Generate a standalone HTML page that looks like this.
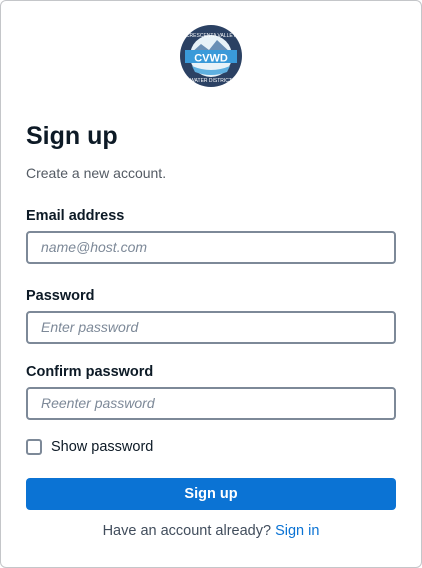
<!DOCTYPE html>
<html><head><style>
*{box-sizing:border-box;margin:0;padding:0}
body{width:422px;height:568px;background:#fff;font-family:"Liberation Sans",sans-serif;position:relative;overflow:hidden}
.card{position:absolute;left:0;top:0;width:422px;height:568px;border:1px solid #c4c6c9;border-radius:6px}
.a{position:absolute;white-space:nowrap}
.h{left:26px;top:122px;font-size:25px;font-weight:bold;color:#0d1a26}
.sub{left:26px;top:165px;font-size:14px;color:#545b64}
.lbl{left:26px;font-size:14.5px;font-weight:bold;color:#0d1a26}
.in{left:26px;width:370px;height:33px;border:2px solid #7d8998;border-radius:4px;padding-left:13px;font-size:14px;font-style:italic;color:#7d8998;line-height:29px}
.cb{left:26px;top:439px;width:16px;height:16px;border:2px solid #7d8998;border-radius:3px}
.btn{left:26px;top:478px;width:370px;height:32px;background:#0b73d4;border-radius:4px;color:#fff;font-weight:bold;font-size:14.5px;text-align:center;line-height:32px}
</style></head><body>
<div class="card"></div>
<svg class="a" style="left:179px;top:24px" width="64" height="64" viewBox="0 0 64 64">
<circle cx="32" cy="32" r="31" fill="#2b4163"/>
<circle cx="32" cy="32" r="21" fill="#e8f2f8"/>
<path d="M11 30 L22 20 L30 26 L38 16 L53 30 Z" fill="#6a8fb5"/>
<rect x="6" y="26" width="52" height="13" fill="#3a9ad9"/>
<text x="32" y="37.5" font-size="11" font-weight="bold" fill="#fff" text-anchor="middle" font-family="Liberation Sans">CVWD</text>
<path d="M13 42 Q32 50 51 42 L48 48 Q32 54 16 48Z" fill="#5fb0e0"/>
<text x="32" y="13" font-size="5" fill="#fff" text-anchor="middle" font-family="Liberation Sans">CRESCENTA VALLEY</text>
<text x="32" y="58" font-size="5" fill="#fff" text-anchor="middle" font-family="Liberation Sans">WATER DISTRICT</text>
</svg>
<div class="a h">Sign up</div>
<div class="a sub">Create a new account.</div>
<div class="a lbl" style="top:208px">Email address</div>
<div class="a in" style="top:231px">name@host.com</div>
<div class="a lbl" style="top:288px">Password</div>
<div class="a in" style="top:311px">Enter password</div>
<div class="a lbl" style="top:364px">Confirm password</div>
<div class="a in" style="top:387px">Reenter password</div>
<div class="a cb"></div>
<div class="a" style="left:51px;top:439px;font-size:14.5px;color:#0d1a26">Show password</div>
<div class="a btn">Sign up</div>
<div class="a" style="left:0;width:422px;text-align:center;top:523px;font-size:14.5px;color:#414d5c">Have an account already? <span style="color:#0b73d4">Sign in</span></div>
</body></html>
